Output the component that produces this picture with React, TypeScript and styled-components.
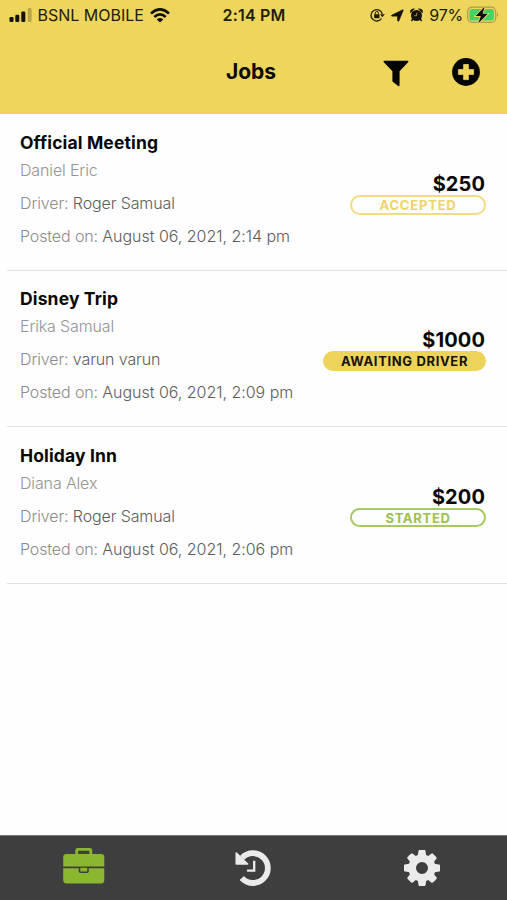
import React from "react";
import styled, { createGlobalStyle } from "styled-components";

const GlobalStyle = createGlobalStyle`
  * { box-sizing: border-box; }
  body {
    margin: 0;
    background: #fff;
    font-family: Inter, "Liberation Sans", sans-serif;
  }
`;

const Screen = styled.div`
  width: 507px;
  height: 900px;
  display: flex;
  flex-direction: column;
  overflow: hidden;
  background: #fefefe;
`;

const Header = styled.header`
  height: 114px;
  flex: none;
  background: #eed55c;
`;

const StatusBar = styled.div`
  height: 30px;
  display: grid;
  grid-template-columns: 180px 1fr 180px;
  align-items: center;
  padding: 0 8px 0 9px;
  color: #211d0b;
`;

const StatusGroup = styled.div<{ $end?: boolean }>`
  display: flex;
  align-items: center;
  justify-content: ${(p) => (p.$end ? "flex-end" : "flex-start")};
  svg { flex: none; }
`;

const Carrier = styled.span`
  font-size: 16px;
  line-height: 20px;
  margin: 0 6px 0 5.5px;
  white-space: nowrap;
`;

const Clock = styled.span`
  text-align: center;
  font-size: 16px;
  line-height: 20px;
  font-weight: 600;
  letter-spacing: 0.2px;
`;

const Percent = styled.span`
  font-size: 16px;
  line-height: 20px;
  letter-spacing: -0.2px;
  margin: 0 4px 0 6px;
`;

const TitleBar = styled.div`
  height: 84px;
  display: grid;
  grid-template-columns: 1fr 100px 1fr;
  padding: 0 26px 0 21px;
`;

const PageTitle = styled.h1`
  grid-column: 2;
  margin: 28px 0 0;
  text-align: center;
  font-size: 21px;
  line-height: 28px;
  font-weight: 700;
  color: #0b0a04;
`;

const Actions = styled.div`
  display: flex;
  justify-content: flex-end;
  align-items: flex-start;
  gap: 43px;
  padding: 28px 1px 0 0;
`;

const IconButton = styled.button`
  display: flex;
  padding: 0;
  border: 0;
  background: none;
`;

const JobList = styled.main`
  flex: 1;
  padding-top: 0.5px;
`;

const JobRow = styled.article`
  height: 156.4px;
  margin-left: 7px;
  padding: 16.5px 22px 0 13px;
  display: flex;
  justify-content: space-between;
  border-bottom: 1.5px solid #e2e2e2;
`;

const JobTitle = styled.h2`
  margin: 0;
  font-size: 17.5px;
  line-height: 24px;
  font-weight: 700;
  letter-spacing: 0.14px;
  color: #080808;
  white-space: nowrap;
`;

const Customer = styled.p`
  margin: 4px 0 0;
  font-size: 16px;
  line-height: 22px;
  font-weight: 300;
  letter-spacing: -0.14px;
  color: #949494;
`;

const Detail = styled.p`
  margin: 11px 0 0;
  font-size: 16px;
  line-height: 22px;
  font-weight: 300;
  letter-spacing: -0.12px;
  color: #8c8c8c;
  white-space: nowrap;
`;

const DetailValue = styled.span<{ $tracking?: number }>`
  color: #5c5c5c;
  letter-spacing: ${(p) => p.$tracking ?? -0.03}px;
`;

const Summary = styled.div`
  display: flex;
  flex-direction: column;
  align-items: flex-end;
  padding-top: 41px;
`;

const Price = styled.strong`
  font-size: 20px;
  line-height: 24px;
  font-weight: 700;
  letter-spacing: 0.1px;
  color: #080808;
`;

type Tone = "accepted" | "awaiting" | "started";

const tones: Record<Tone, { color: string; border: string; fill: string; width: number; tracking: number }> = {
  accepted: { color: "#eed46a", border: "#f0dc84", fill: "transparent", width: 136, tracking: 0.8 },
  awaiting: { color: "#17140a", border: "#ecd359", fill: "#ecd359", width: 163, tracking: 0.65 },
  started: { color: "#9cc14e", border: "#a5ca60", fill: "transparent", width: 136, tracking: 0.7 },
};

const Status = styled.span<{ $tone: Tone }>`
  width: ${(p) => tones[p.$tone].width}px;
  height: 19.5px;
  margin: -1px -1px 0 0;
  display: flex;
  align-items: center;
  justify-content: center;
  border: 2px solid ${(p) => tones[p.$tone].border};
  border-radius: 10px;
  background: ${(p) => tones[p.$tone].fill};
  color: ${(p) => tones[p.$tone].color};
  font-size: 13px;
  line-height: 16px;
  font-weight: 700;
  letter-spacing: ${(p) => tones[p.$tone].tracking}px;
`;

const TabBar = styled.nav`
  height: 65px;
  flex: none;
  display: grid;
  grid-template-columns: repeat(3, 1fr);
  justify-items: center;
  align-items: start;
  padding-right: 1px;
  background: #3e3e3e;
  border-top: 1px solid #777;
`;

const Tab = styled(IconButton)<{ $top: number }>`
  padding-top: ${(p) => p.$top}px;
`;

const SignalIcon = () => (
  <svg width="23" height="14" viewBox="0 0 23 14" fill="#141208">
    <rect x="0.5" y="9" width="4" height="5" rx="1.2" />
    <rect x="6.3" y="6.8" width="4" height="7.2" rx="1.2" />
    <rect x="12.3" y="3.5" width="4" height="10.5" rx="1.2" />
    <rect x="18.8" y="0" width="3.8" height="14" rx="1.2" opacity="0.25" />
  </svg>
);

const WifiIcon = () => (
  <svg width="20" height="15" viewBox="0 0 20 15" fill="none" stroke="#141208" strokeWidth="2.6">
    <path d="M1 5.5Q10-2.6 19 5.5" />
    <path d="M4.3 9Q10 3.8 15.7 9" />
    <path d="M10 14.6L6.7 11.4Q10 8.6 13.3 11.4Z" fill="#141208" stroke="none" />
  </svg>
);

const RotationLockIcon = () => (
  <svg width="15" height="14" viewBox="0 0 15 14" fill="none" stroke="#211d0b">
    <path d="M11.5 10.5A5.7 5.7 0 1 1 12.3 6" strokeWidth="1.3" />
    <path d="M10 6.3H14.8L12.4 9.2Z" fill="#211d0b" stroke="none" />
    <rect x="4.1" y="6.2" width="5.4" height="4" rx="0.6" fill="#211d0b" stroke="none" />
    <path d="M5.2 6.5V5.1a1.6 1.6 0 0 1 3.2 0V6.5" strokeWidth="1" />
  </svg>
);

const LocationIcon = () => (
  <svg width="13" height="13" viewBox="0 0 13 13" fill="#141208">
    <path d="M0.7 6.3L11.6 0.9Q12.4 0.6 12.1 1.4L7.7 12Q7 12.6 6.7 11.8V7.1H1Q0 6.9 0.7 6.3Z" stroke="#141208" strokeWidth="0.8" />
  </svg>
);

const AlarmIcon = () => (
  <svg width="13" height="14" viewBox="0 0 13 14">
    <circle cx="6.5" cy="7.5" r="5.5" fill="#141208" />
    <path d="M0.4 4.6Q-0.3 0.7 4.6 0.8L0.8 4.8ZM12.6 4.6Q13.3 0.7 8.4 0.8L12.2 4.8Z" fill="#141208" stroke="#141208" strokeWidth="0.5" />
    <path d="M2.8 11L1.4 13M10.2 11L11.6 13" stroke="#141208" strokeWidth="1.5" />
    <path d="M6.7 4.8V7.7H4.2" fill="none" stroke="#b5a246" strokeWidth="0.9" />
  </svg>
);

const BatteryIcon = () => (
  <svg width="32" height="18" viewBox="0 0 32 18">
    <rect x="0.7" y="1.2" width="28" height="15.2" rx="4.5" fill="none" stroke="#aa9c4b" strokeWidth="1.2" />
    <rect x="2.5" y="3" width="24.4" height="11.6" rx="2.7" fill="#45d168" />
    <path d="M30 6.4Q32.4 8.8 30 11.2Z" fill="#aa9c4b" />
    <path d="M17.6 0.8L8.7 10H13.8L11.3 17.2L20.8 7.8H15.6Z" fill="#090b05" stroke="#eed55c" strokeWidth="1.8" paintOrder="stroke" />
  </svg>
);

const FilterIcon = () => (
  <svg width="26" height="29" viewBox="0 0 26 29" fill="#050502">
    <path d="M1.1 2.7H24.8Q26 2.9 25.3 4L16.6 13.2V27.2Q16.3 28.6 15.2 28L10 24Q9.4 23.6 9.4 22.8V13.2L0.6 4Q0 3 1.1 2.7Z" />
  </svg>
);

const AddIcon = () => (
  <svg width="28" height="28" viewBox="0 0 28 28">
    <circle cx="14" cy="14" r="13.9" fill="#050502" />
    <path d="M11.6 6.5H16.4V11.6H21.6V16.4H16.4V21.6H11.6V16.4H6.4V11.6H11.6Z" fill="#eed55c" stroke="#eed55c" strokeWidth="0.8" strokeLinejoin="round" />
  </svg>
);

const BriefcaseIcon = () => (
  <svg width="42" height="36" viewBox="0 0 42 36" fill="#8ab72e">
    <path d="M13.7 7V2.4Q13.7 1.4 14.7 1.4H26.8Q27.8 1.4 27.8 2.4V7" fill="none" stroke="#8ab72e" strokeWidth="2.8" />
    <path d="M3.5 6H38Q41.3 6 41.3 9.3V18.4H0.2V9.3Q0.2 6 3.5 6Z" />
    <path d="M0.2 20.2H15.7V23.2Q15.7 25 17.5 25H24Q25.8 25 25.8 23.2V20.2H41.3V32Q41.3 35.4 38 35.4H3.5Q0.2 35.4 0.2 32Z" />
    <rect x="17.3" y="19.8" width="6.9" height="3.7" />
  </svg>
);

const HistoryIcon = () => (
  <svg width="36" height="36" viewBox="0 0 36 36" fill="none" stroke="#ebebeb">
    <path d="M7.2 7.8A14.9 14.9 0 1 1 6.8 28" strokeWidth="5.8" />
    <path d="M1.3 3L12.6 14H1.3Z" fill="#ebebeb" strokeWidth="1.6" strokeLinejoin="round" />
    <path d="M19.2 12V20.7H13.2" strokeWidth="2.3" strokeLinecap="square" />
  </svg>
);

const SettingsIcon = () => (
  <svg width="36" height="36" viewBox="128 128 1536 1536" fill="#ebebeb">
    <path d="M1152 896q0-106-75-181t-181-75-181 75-75 181 75 181 181 75 181-75 75-181zm512-109v222q0 12-8 23t-20 13l-185 28q-19 54-39 91 35 50 107 138 10 12 10 25t-9 23q-27 37-99 108t-94 71q-12 0-26-9l-138-108q-44 23-91 38-16 136-29 186-7 28-36 28h-222q-14 0-24.5-8.5t-11.5-21.5l-28-184q-49-16-90-37l-141 107q-10 9-25 9-14 0-25-11-126-114-165-168-7-10-7-23 0-12 8-23 15-21 51-66.5t54-70.5q-27-50-41-99l-183-27q-13-2-21-12.5t-8-23.5v-222q0-12 8-23t19-13l186-28q14-46 39-92-40-57-107-138-10-12-10-24 0-10 9-23 26-36 98.5-107.5t94.5-71.5q13 0 26 10l138 107q44-23 91-38 16-136 29-186 7-28 36-28h222q14 0 24.5 8.5t11.5 21.5l28 184q49 16 90 37l142-107q9-9 24-9 13 0 25 10 129 119 165 170 7 8 7 22 0 12-8 23-15 21-51 66.5t-54 70.5q26 50 41 98l183 28q13 2 21 12.5t8 23.5z" />
  </svg>
);

interface Job {
  title: string;
  customer: string;
  driver: string;
  posted: string;
  price: string;
  status: string;
  tone: Tone;
}

const jobs: Job[] = [
  { title: "Official Meeting", customer: "Daniel Eric", driver: "Roger Samual", posted: "August 06, 2021, 2:14 pm", price: "$250", status: "ACCEPTED", tone: "accepted" },
  { title: "Disney Trip", customer: "Erika Samual", driver: "varun varun", posted: "August 06, 2021, 2:09 pm", price: "$1000", status: "AWAITING DRIVER", tone: "awaiting" },
  { title: "Holiday Inn", customer: "Diana Alex", driver: "Roger Samual", posted: "August 06, 2021, 2:06 pm", price: "$200", status: "STARTED", tone: "started" },
];

const JobItem = ({ job }: { job: Job }) => (
  <JobRow>
    <div>
      <JobTitle>{job.title}</JobTitle>
      <Customer>{job.customer}</Customer>
      <Detail>Driver: <DetailValue $tracking={-0.12}>{job.driver}</DetailValue></Detail>
      <Detail>Posted on: <DetailValue>{job.posted}</DetailValue></Detail>
    </div>
    <Summary>
      <Price>{job.price}</Price>
      <Status $tone={job.tone}>{job.status}</Status>
    </Summary>
  </JobRow>
);

const StatusIcons = styled.div`
  display: flex;
  align-items: center;
  gap: 6px;
`;

export default function App() {
  return (
    <Screen>
      <GlobalStyle />
      <Header>
        <StatusBar>
          <StatusGroup>
            <SignalIcon />
            <Carrier>BSNL MOBILE</Carrier>
            <WifiIcon />
          </StatusGroup>
          <Clock>2:14 PM</Clock>
          <StatusGroup $end>
            <StatusIcons>
              <RotationLockIcon />
              <LocationIcon />
              <AlarmIcon />
            </StatusIcons>
            <Percent>97%</Percent>
            <BatteryIcon />
          </StatusGroup>
        </StatusBar>
        <TitleBar>
          <PageTitle>Jobs</PageTitle>
          <Actions>
            <IconButton aria-label="Filter"><FilterIcon /></IconButton>
            <IconButton aria-label="Add job"><AddIcon /></IconButton>
          </Actions>
        </TitleBar>
      </Header>
      <JobList>
        {jobs.map((job) => <JobItem key={job.title} job={job} />)}
      </JobList>
      <TabBar>
        <Tab $top={12} aria-label="Jobs"><BriefcaseIcon /></Tab>
        <Tab $top={14} aria-label="History"><HistoryIcon /></Tab>
        <Tab $top={14} aria-label="Settings"><SettingsIcon /></Tab>
      </TabBar>
    </Screen>
  );
}
